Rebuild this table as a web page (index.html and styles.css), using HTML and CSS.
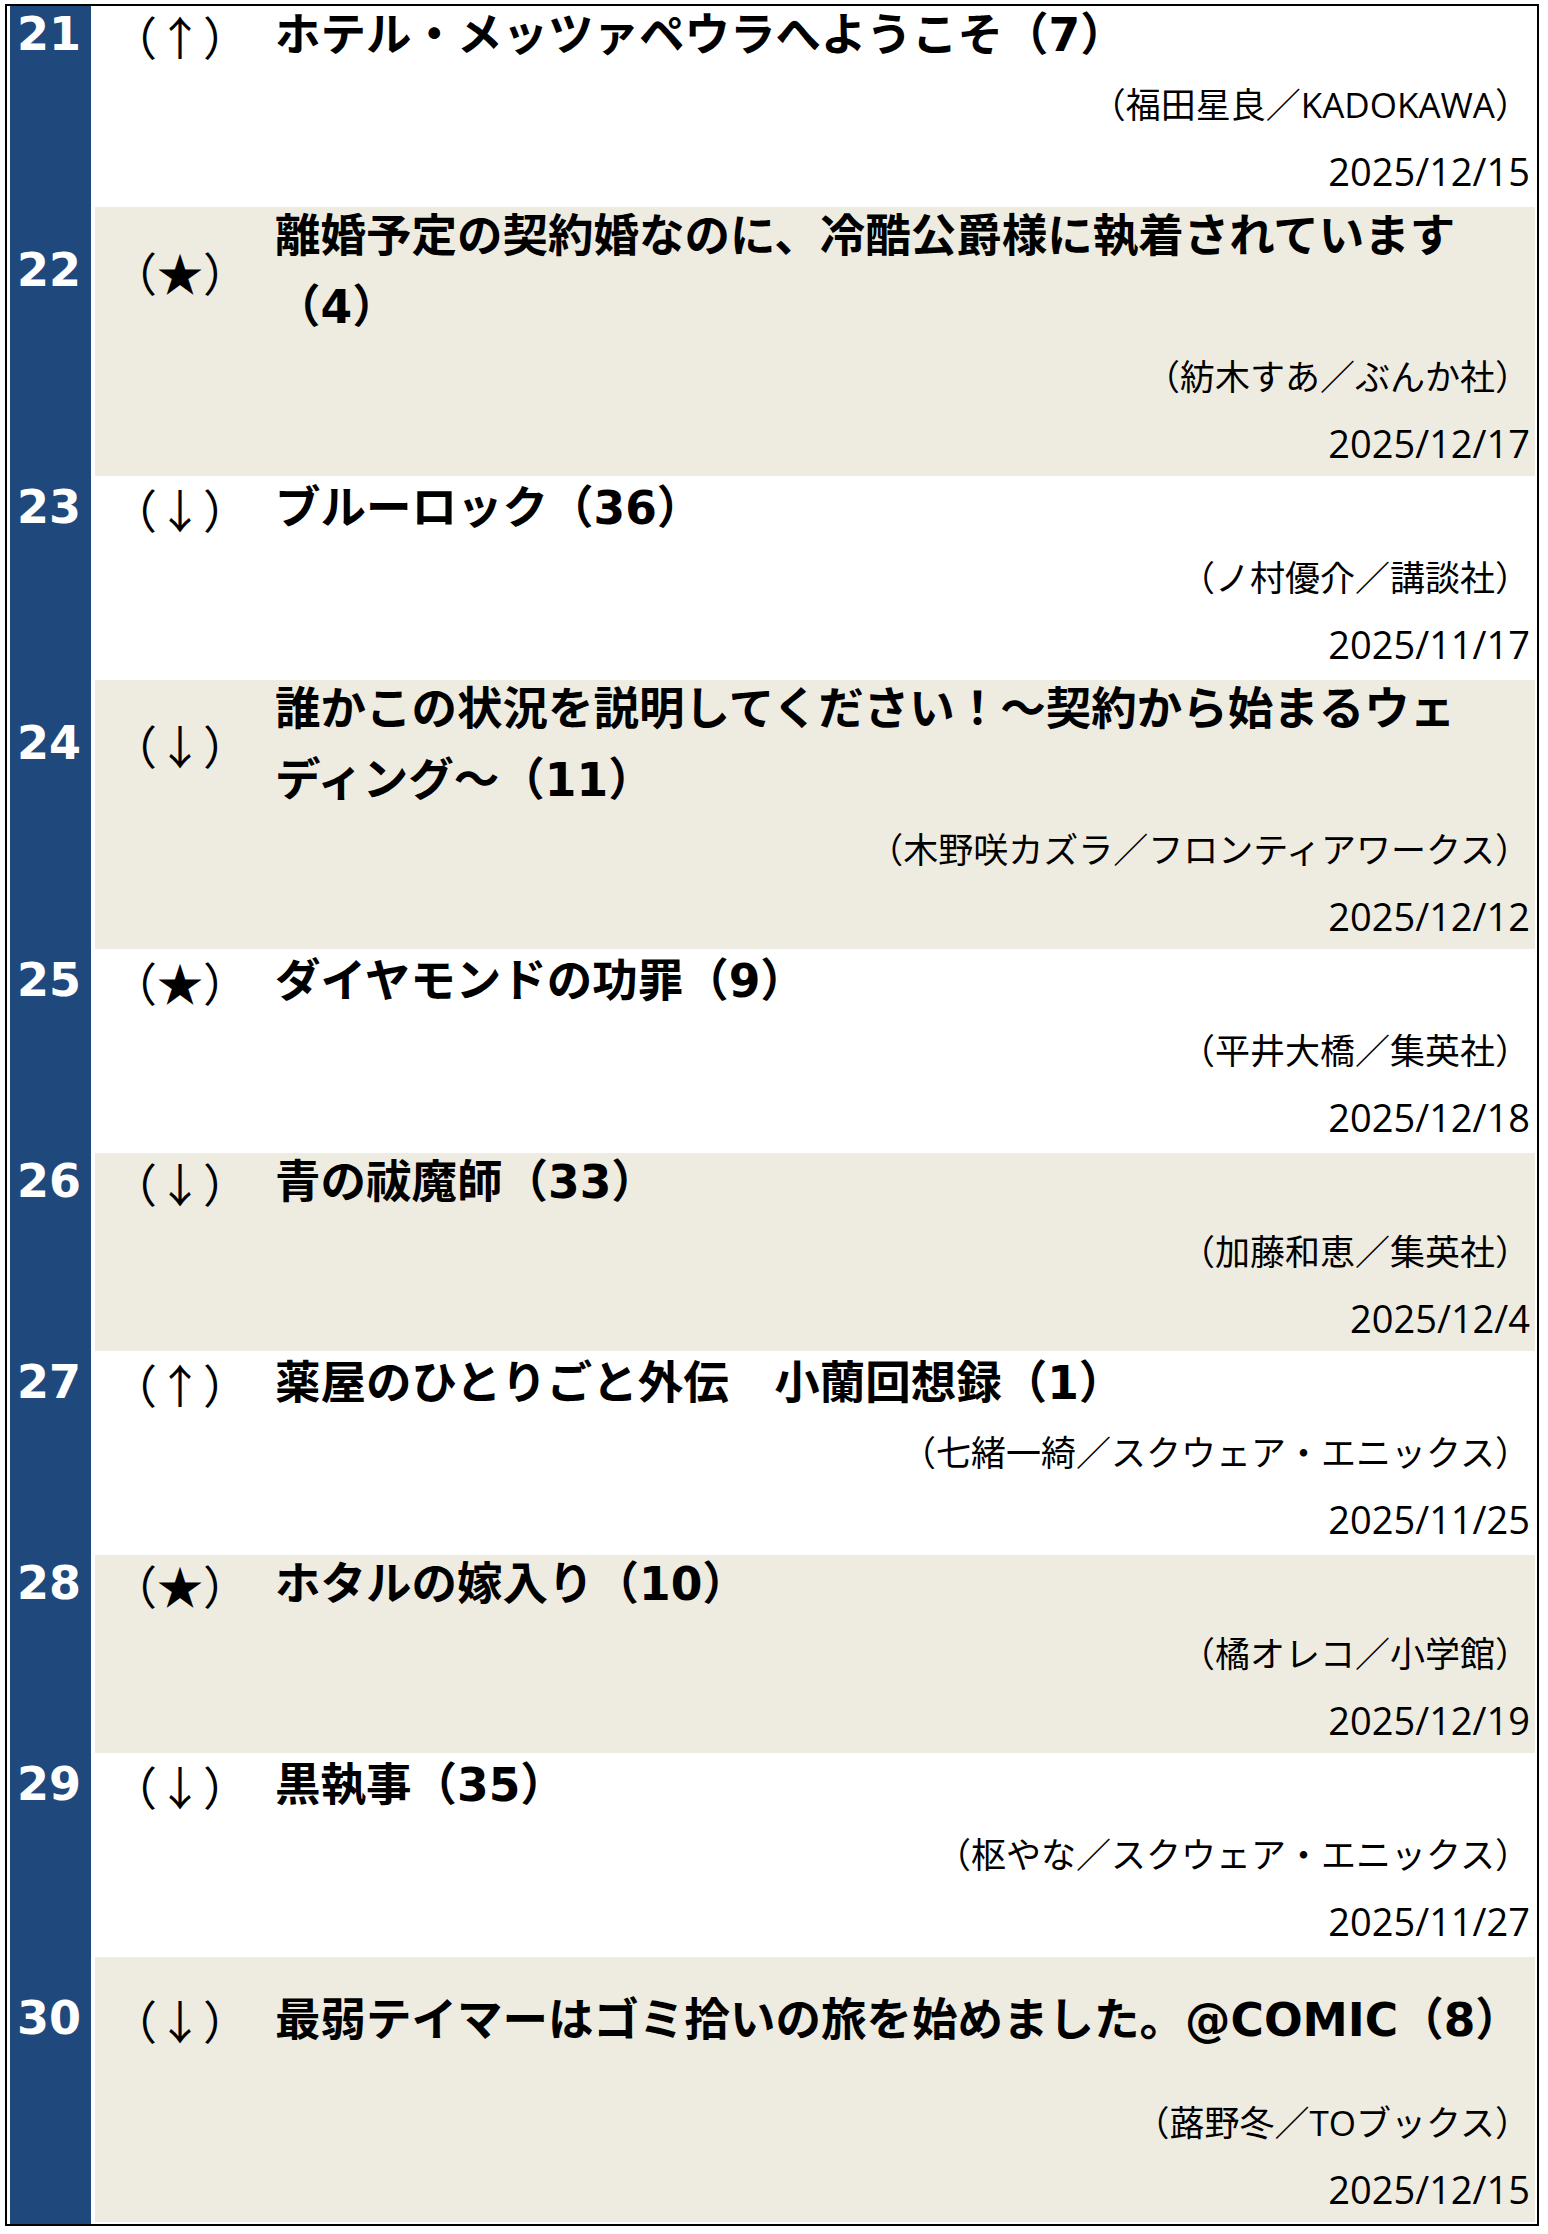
FILE: index.html
```html
<!DOCTYPE html>
<html lang="ja">
<head>
<meta charset="utf-8">
<title>ランキング 21〜30位</title>
<link rel="stylesheet" href="styles.css">
</head>
<body>
<div class="ranking">
  <div class="row">
    <div class="rank">21</div>
    <div class="head"><div class="mark">（↑）</div><div class="title">ホテル・メッツァペウラへようこそ（7）</div></div>
    <div class="author">（福田星良／KADOKAWA）</div>
    <div class="date">2025/12/15</div>
  </div>
  <div class="row alt">
    <div class="rank">22</div>
    <div class="head"><div class="mark">（★）</div><div class="title">離婚予定の契約婚なのに、冷酷公爵様に執着されています（4）</div></div>
    <div class="author">（紡木すあ／ぶんか社）</div>
    <div class="date">2025/12/17</div>
  </div>
  <div class="row">
    <div class="rank">23</div>
    <div class="head"><div class="mark">（↓）</div><div class="title">ブルーロック（36）</div></div>
    <div class="author">（ノ村優介／講談社）</div>
    <div class="date">2025/11/17</div>
  </div>
  <div class="row alt">
    <div class="rank">24</div>
    <div class="head"><div class="mark">（↓）</div><div class="title">誰かこの状況を説明してください！～契約から始まるウェ<br>ディング～（11）</div></div>
    <div class="author">（木野咲カズラ／フロンティアワークス）</div>
    <div class="date">2025/12/12</div>
  </div>
  <div class="row">
    <div class="rank">25</div>
    <div class="head"><div class="mark">（★）</div><div class="title">ダイヤモンドの功罪（9）</div></div>
    <div class="author">（平井大橋／集英社）</div>
    <div class="date">2025/12/18</div>
  </div>
  <div class="row alt">
    <div class="rank">26</div>
    <div class="head"><div class="mark">（↓）</div><div class="title">青の祓魔師（33）</div></div>
    <div class="author">（加藤和恵／集英社）</div>
    <div class="date">2025/12/4</div>
  </div>
  <div class="row">
    <div class="rank">27</div>
    <div class="head"><div class="mark">（↑）</div><div class="title">薬屋のひとりごと外伝　小蘭回想録（1）</div></div>
    <div class="author">（七緒一綺／スクウェア・エニックス）</div>
    <div class="date">2025/11/25</div>
  </div>
  <div class="row alt">
    <div class="rank">28</div>
    <div class="head"><div class="mark">（★）</div><div class="title">ホタルの嫁入り（10）</div></div>
    <div class="author">（橘オレコ／小学館）</div>
    <div class="date">2025/12/19</div>
  </div>
  <div class="row">
    <div class="rank">29</div>
    <div class="head"><div class="mark">（↓）</div><div class="title">黒執事（35）</div></div>
    <div class="author">（枢やな／スクウェア・エニックス）</div>
    <div class="date">2025/11/27</div>
  </div>
  <div class="row alt last">
    <div class="rank">30</div>
    <div class="head"><div class="mark">（↓）</div><div class="title tall">最弱テイマーはゴミ拾いの旅を始めました。@COMIC（8）</div></div>
    <div class="author">（蕗野冬／TOブックス）</div>
    <div class="date">2025/12/15</div>
  </div>
</div>
</body>
</html>
```

FILE: styles.css
```css
html, body {
  margin: 0;
  padding: 0;
  background: #ffffff;
}

body {
  font-family: "Noto Sans CJK JP", "Noto Sans", sans-serif;
  color: #000000;
}

.ranking {
  margin: 4px 0 0 5px;
  width: 1525px;
  border: 2px solid #000000;
  padding: 0 2px 0 3px;
}

.row {
  display: grid;
  grid-template-columns: 81px 1fr;
  column-gap: 4px;
  padding-bottom: 3px;
  background-image: linear-gradient(#1f497d, #1f497d);
  background-size: 81px 100%;
  background-repeat: no-repeat;
}

.row.last {
  padding-bottom: 2px;
}

.rank {
  grid-column: 1;
  grid-row: 1;
  align-self: center;
  margin-top: -10px;
  padding-left: 7px;
  color: #ffffff;
  font-family: "DejaVu Sans", sans-serif;
  font-weight: 700;
  font-size: 46px;
  line-height: 60px;
}

.head {
  grid-column: 2;
  grid-row: 1;
  display: grid;
  grid-template-columns: 180px 1fr;
  align-items: center;
}

.author, .date {
  grid-column: 2;
  text-align: right;
  padding-right: 5px;
  font-family: "Open Sans", "Noto Sans CJK JP", sans-serif;
}

.author {
  grid-row: 2;
  font-size: 35px;
  line-height: 67px;
}

.date {
  grid-row: 3;
  font-size: 38px;
  line-height: 66px;
}

.row.alt .head,
.row.alt .author,
.row.alt .date {
  background: #eeece1;
}

.mark {
  margin-top: -8px;
  padding-left: 16px;
  font-size: 46px;
  line-height: 60px;
}

.title {
  margin-top: -6px;
  font-family: "DejaVu Sans", "Noto Sans CJK JP", sans-serif;
  font-weight: 700;
  font-size: 45.5px;
  line-height: 71px;
}

.title.tall {
  min-height: 138px;
  display: flex;
  align-items: center;
}
```
